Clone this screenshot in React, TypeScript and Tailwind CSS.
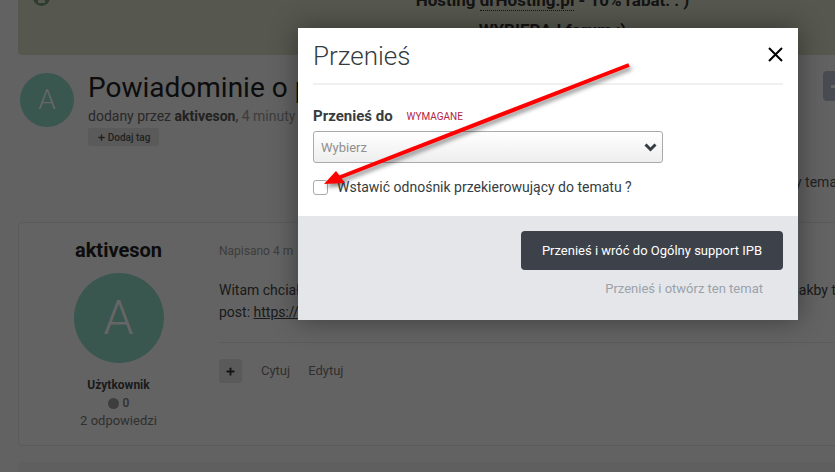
import React from 'react';
import { Plus } from 'lucide-react';

function Avatar({ className }: { className: string }) {
  return (
    <div className={`flex shrink-0 items-center justify-center rounded-full bg-[#8fd6c6] font-light text-white ${className}`}>
      A
    </div>
  );
}

function Page() {
  return (
    <div className="flex h-[472px] flex-col overflow-hidden bg-[#f4f4f4] pl-[18px] text-[#333]">
      {/* Baner */}
      <div className="relative -mt-[15px] h-[70px] shrink-0 rounded-bl bg-[#d8dac4] pl-[270px] pr-[18px] text-center text-[17px] font-bold leading-[30px] text-[#333]">
        <span className="absolute left-[15px] top-[4px] flex h-[17px] w-[17px] items-end justify-center rounded-full bg-[#6f9a78]">
          <span className="mb-[3px] h-[5px] w-[7px] rounded-t-full bg-[#d8dac4]" />
        </span>
        <p className="whitespace-nowrap">
          Hosting <span className="border-b border-dotted border-[#333]">drHosting.pl</span> - 10% rabat: : )
        </p>
        <p className="whitespace-nowrap">WYBIERAJ forum ;)</p>
      </div>

      {/* Naglowek tematu */}
      <div className="mt-[18px] flex h-[149px] shrink-0 gap-[14px] pl-[2px]">
        <Avatar className="h-[54px] w-[54px] text-[28px]" />
        <div className="min-w-0 grow">
          <div className="flex items-start justify-between">
            <h1 className="-mt-[1px] whitespace-nowrap text-[28px] leading-[32px] text-[#222]">Powiadominie o p</h1>
            <span className="-mt-[2px] flex h-[30px] w-[12px] items-center justify-end rounded-l bg-[#b3bcca]">
              <span className="h-[3px] w-[4px] bg-white" />
            </span>
          </div>
          <p className="mt-[2px] text-sm leading-[20px] text-[#666]">
            dodany przez <strong className="font-bold text-[#555]">aktiveson</strong>, <span className="text-[#999]">4 minuty</span>
          </p>
          <div className="mt-[2px] flex h-[18px] w-[71px] items-center justify-center gap-[2px] rounded-[3px] bg-[#e0e0e0] text-[10px] font-medium text-[#555]">
            <Plus size={9} strokeWidth={4} />
            Dodaj tag
          </div>
          <p className="-mr-[2px] mt-[26px] text-right text-sm leading-5 text-[#555]">y tema</p>
        </div>
      </div>

      {/* Post */}
      <div className="flex h-[224px] shrink-0 rounded-l border-y border-l border-[#e4e4e4] bg-[#f8f8f8]">
        <div className="flex w-[200px] shrink-0 flex-col items-center pr-[1px] pt-[15px]">
          <h3 className="text-xl font-bold leading-[24px] text-[#222]">aktiveson</h3>
          <Avatar className="mt-[11px] h-[90px] w-[90px] text-[48px]" />
          <p className="mt-[13px] text-xs font-bold leading-[18px] text-[#444]">Użytkownik</p>
          <p className="flex items-center gap-[4px] text-xs leading-[18px] text-[#777]">
            <span className="h-[11px] w-[11px] rounded-full bg-[#999]" />
            <span className="font-medium">0</span>
          </p>
          <p className="text-[13px] leading-[18px] text-[#777]">2 odpowiedzi</p>
        </div>
        <div className="min-w-0 grow pt-[19px]">
          <p className="text-xs leading-[18px] text-[#999]">Napisano 4 m</p>
          <div className="mt-[19px] flex justify-between whitespace-nowrap text-sm leading-[22px] text-[#444]">
            <span>Witam chciał</span>
            <span className="-mr-[1px]">jakby t</span>
          </div>
          <p className="text-sm leading-[22px] text-[#444]">
            post: <span className="underline">https://</span>
          </p>
          <div className="mt-[19px] border-t border-[#e4e4e4]" />
          <div className="mt-[16px] flex items-center text-[13px] text-[#777]">
            <span className="flex h-6 w-[23px] items-center justify-center rounded-[3px] bg-[#e0e0e0] text-[#333]">
              <Plus size={11} strokeWidth={4} />
            </span>
            <span className="ml-[19px]">Cytuj</span>
            <span className="ml-[18px]">Edytuj</span>
          </div>
        </div>
      </div>

      <div className="mt-[16px] h-4 shrink-0 bg-[#ededed]" />
    </div>
  );
}

function MoveDialog() {
  return (
    <div className="absolute inset-0 bg-black/60">
      <div className="absolute left-[298px] top-[28px] w-[500px] bg-white shadow-[0_0_25px_rgba(0,0,0,0.4)]">
        <div className="px-[15px]">
          <div className="flex h-[57px] items-center justify-between border-b-2 border-[#f0f0f0] pt-[1px]">
            <h2 className="text-[26px] font-light text-[#353c41]">Przenieś</h2>
            <svg width="15" height="15" viewBox="0 0 15 15" className="-mt-[3px]">
              <path d="M1 1L14 14M14 1L1 14" stroke="#000" strokeWidth="2" fill="none" />
            </svg>
          </div>
          <div className="flex h-[131px] flex-col pt-[20px]">
            <div className="flex items-center gap-[14px]">
              <span className="text-[15px] font-bold leading-5 text-[#353c41]">Przenieś do</span>
              <span className="mt-[2px] text-[10px] leading-5 text-[#b5233f]">WYMAGANE</span>
            </div>
            <div className="mt-[4px] flex h-8 w-[350px] items-center justify-between rounded-[3px] border border-[#aaa] bg-gradient-to-b from-white to-[#eeeeee] pl-[7px] pr-[5px]">
              <span className="mt-[2px] text-[13px] text-[#8f8f8f]">Wybierz</span>
              <svg width="13" height="9" viewBox="0 0 13 9">
                <path d="M1.5 1.5L6.5 6.5L11.5 1.5" stroke="#353c41" strokeWidth="3" fill="none" />
              </svg>
            </div>
            <div className="mt-[17px] flex items-center gap-[9px]">
              <span className="h-[15px] w-[15px] rounded-[3px] border border-[#aaa] bg-white" />
              <span className="text-sm leading-[15px] text-[#353c41]">Wstawić odnośnik przekierowujący do tematu ?</span>
            </div>
          </div>
        </div>
        <div className="flex h-[104px] flex-col items-end bg-[#e5e6ea] pr-[15px] pt-[15px]">
          <button className="h-[39px] w-[262px] rounded bg-[#3d4149] text-[13px] text-white">
            Przenieś i wróć do Ogólny support IPB
          </button>
          <span className="mr-5 mt-[9px] text-[13px] leading-5 text-[#9aa2aa]">Przenieś i otwórz ten temat</span>
        </div>
      </div>
    </div>
  );
}

export default function App() {
  return (
    <div className="relative h-[472px] w-[835px] overflow-hidden font-['Roboto',sans-serif]">
      <Page />
      <MoveDialog />
      {/* Strzalka narysowana na zrzucie */}
      <svg className="absolute inset-0 drop-shadow-[2px_3px_2px_rgba(0,0,0,0.45)]" width="835" height="472" viewBox="0 0 835 472" fill="none">
        <line x1="629" y1="65" x2="338" y2="178" stroke="#ff0000" strokeWidth="4" />
        <polygon points="324,184 336,171 345,183" fill="#ff0000" />
      </svg>
    </div>
  );
}
